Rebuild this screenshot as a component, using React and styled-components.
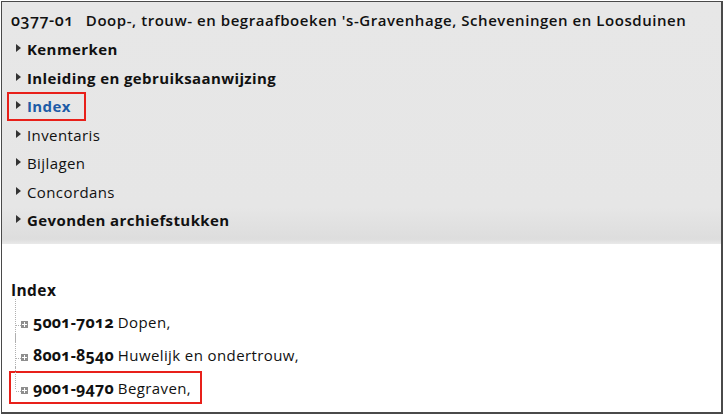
import React from "react";
import styled, { createGlobalStyle } from "styled-components";

const Global = createGlobalStyle`
  html, body { margin: 0; padding: 0; background: #fff; }
  body {
    font-family: "Open Sans", "Noto Sans", sans-serif;
    color: #111;
    letter-spacing: 0.4px;
    font-variant-numeric: oldstyle-nums;
  }
`;

const Frame = styled.div`
  margin: 1px 0 0 1px;
  width: 719px;
  height: 410px;
  border: 1px solid #4a4a4a;
  border-right-width: 2px;
  border-bottom-width: 2px;
  display: flex;
  flex-direction: column;
  overflow: hidden;
`;

const TopPanel = styled.div`
  height: 242px;
  box-sizing: border-box;
  padding: 4px 0 0 0;
  background: linear-gradient(#e7e7e7 0%, #e6e6e6 85%, #dddddd 98%, #e9e9e9 100%);
  display: flex;
  flex-direction: column;
`;

const Title = styled.div`
  padding-left: 9px;
  line-height: 29px;
  font-size: 15px;
  font-weight: 600;
  letter-spacing: 0.55px;
  white-space: nowrap;
`;

const Code = styled.span`
  font-size: 16px;
  margin-right: 12px;
`;

const MenuItem = styled.div`
  display: flex;
  align-items: center;
  width: fit-content;
  margin-left: 5px;
  padding: 0 13px 0 7px;
  border: 2px solid ${(p) => (p.$highlight ? "#e8201a" : "transparent")};
  line-height: 24.5px;
  font-size: 15px;
  font-weight: ${(p) => (p.$bold ? 700 : 400)};
  color: ${(p) => (p.$active ? "#1d5ba6" : "#111")};
`;

const Triangle = styled.span`
  width: 0;
  height: 0;
  border-top: 4px solid transparent;
  border-bottom: 4px solid transparent;
  border-left: 5px solid #333;
  margin-right: 6px;
  transform: translateY(-1px);
`;

const IndexSection = styled.div`
  padding: 34px 0 0 9px;
`;

const Heading = styled.div`
  font-size: 15.5px;
  font-weight: 700;
  line-height: 24px;
`;

const Tree = styled.div`
  display: flex;
  flex-direction: column;
  margin-left: -2px;
  margin-top: 3px;
`;

const TreeItem = styled.div`
  position: relative;
  display: flex;
  align-items: center;
  width: fit-content;
  height: 29px;
  padding: 0 9px 0 10px;
  border: 2px solid ${(p) => (p.$highlight ? "#e8201a" : "transparent")};
  font-size: 15px;
  white-space: nowrap;
  &::before {
    content: "";
    position: absolute;
    left: 4px;
    top: ${(p) => (p.$first ? "-8px" : "-6px")};
    height: ${(p) => (p.$last ? "22px" : p.$first ? "43px" : "39px")};
    border-left: 1px dotted #b0b0b0;
  }
  &::after {
    content: "";
    position: absolute;
    left: 5px;
    top: 18px;
    width: 5px;
    border-top: 1px dotted #b0b0b0;
  }
`;

const Plus = styled.span`
  position: relative;
  flex: none;
  width: 7px;
  height: 7px;
  background: #8e8e8e;
  margin-right: 5px;
  transform: translateY(3px);
  &::before, &::after {
    content: "";
    position: absolute;
    background: #fff;
  }
  &::before { left: 1px; top: 3px; width: 5px; height: 1px; }
  &::after { left: 3px; top: 1px; width: 1px; height: 5px; }
`;

const Num = styled.b`
  font-size: 16px;
  font-weight: 700;
  letter-spacing: 0.2px;
  margin-right: 4px;
`;

const menu = [
  { label: "Kenmerken", bold: true },
  { label: "Inleiding en gebruiksaanwijzing", bold: true },
  { label: "Index", bold: true, active: true, highlight: true },
  { label: "Inventaris" },
  { label: "Bijlagen" },
  { label: "Concordans" },
  { label: "Gevonden archiefstukken", bold: true },
];

const entries = [
  { num: "5001-7012", text: "Dopen," },
  { num: "8001-8540", text: "Huwelijk en ondertrouw," },
  { num: "9001-9470", text: "Begraven,", highlight: true },
];

export default function App() {
  return (
    <>
      <Global />
      <Frame>
        <TopPanel>
          <Title>
            <Code>0377-01</Code>
            Doop-, trouw- en begraafboeken 's-Gravenhage, Scheveningen en Loosduinen
          </Title>
          {menu.map((m) => (
            <MenuItem key={m.label} $bold={m.bold} $active={m.active} $highlight={m.highlight}>
              <Triangle />
              {m.label}
            </MenuItem>
          ))}
        </TopPanel>
        <IndexSection>
          <Heading>Index</Heading>
          <Tree>
            {entries.map((e, i) => (
              <TreeItem
                key={e.num}
                $highlight={e.highlight}
                $first={i === 0}
                $last={i === entries.length - 1}
              >
                <Plus />
                <Num>{e.num}</Num>
                {e.text}
              </TreeItem>
            ))}
          </Tree>
        </IndexSection>
      </Frame>
    </>
  );
}
